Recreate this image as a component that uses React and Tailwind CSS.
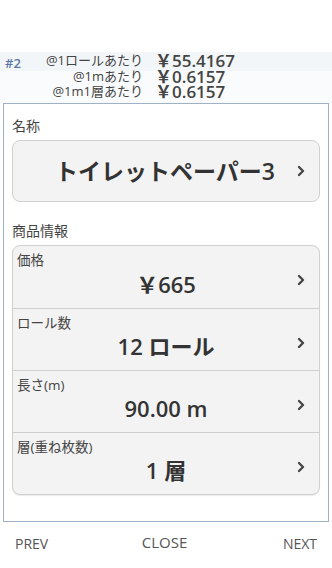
import { ChevronRight } from "lucide-react";

const font = { fontFamily: '"Open Sans", "Noto Sans CJK JP", sans-serif' };

const rows = [
  { label: "価格", value: "￥665" },
  { label: "ロール数", value: "12 ロール" },
  { label: "長さ(m)", value: "90.00 m" },
  { label: "層(重ね枚数)", value: "1 層" },
];

const stats = [
  { label: "@1ロールあたり", value: "￥55.4167" },
  { label: "@1mあたり", value: "￥0.6157" },
  { label: "@1m1層あたり", value: "￥0.6157" },
];

function Chevron() {
  return <ChevronRight size={16} strokeWidth={3.5} className="text-[#444]" />;
}

export default function App() {
  return (
    <div className="flex h-[568px] w-[332px] flex-col bg-white text-[#444]" style={font}>
      <div className="h-[52px]" />
      <div className="relative h-[51px] bg-[#f3f6f8]">
        <div className="absolute inset-x-0 bottom-0 h-[32px] bg-[#fafbfc]" />
        <span className="absolute left-[5px] top-[2px] text-[13px] font-semibold text-[#5b76a6]">#2</span>
        <div className="relative flex flex-col pt-[1px]">
          {stats.map((s) => (
            <div key={s.label} className="flex h-[15.5px] items-center gap-[12px]">
              <span className="w-[143px] text-right text-[13px]">{s.label}</span>
              <span className="text-[17px] font-semibold">{s.value}</span>
            </div>
          ))}
        </div>
      </div>
      <div className="mx-[3px] flex h-[419px] flex-col border border-[#9fb1c6] px-[8px] pt-[11px]">
        <div className="text-[14px]">名称</div>
        <div className="mt-[4px] flex h-[62px] items-center justify-end gap-[18px] rounded-[8px] border border-[#d0d0d0] bg-[#f3f3f3] pr-[10px]">
          <span className="text-[23px] font-semibold text-[#333]">トイレットペーパー3</span>
          <Chevron />
        </div>
        <div className="mt-[18px] text-[14px]">商品情報</div>
        <div className="mt-[4px] flex flex-col overflow-hidden rounded-[8px] border border-[#d0d0d0] bg-[#f3f3f3] shadow-[0_1px_1px_rgba(0,0,0,0.08)]">
          {rows.map((r, i) => (
            <div
              key={r.label}
              className={`relative flex h-[62px] items-center justify-center pt-[14px] ${i > 0 ? "border-t border-[#cfcfcf]" : ""}`}
            >
              <span className="absolute left-[4px] top-[4px] text-[13.5px]">{r.label}</span>
              <span className="text-[22px] font-semibold text-[#333]">{r.value}</span>
              <span className="absolute right-[10px] top-[26px]">
                <Chevron />
              </span>
            </div>
          ))}
        </div>
      </div>
      <div className="flex items-center justify-between px-[15px] pt-[8px] text-[14px] text-[#555]">
        <span className="pt-[3px]">PREV</span>
        <span className="mr-[2px] text-[15px]">CLOSE</span>
        <span className="pt-[3px]">NEXT</span>
      </div>
    </div>
  );
}
